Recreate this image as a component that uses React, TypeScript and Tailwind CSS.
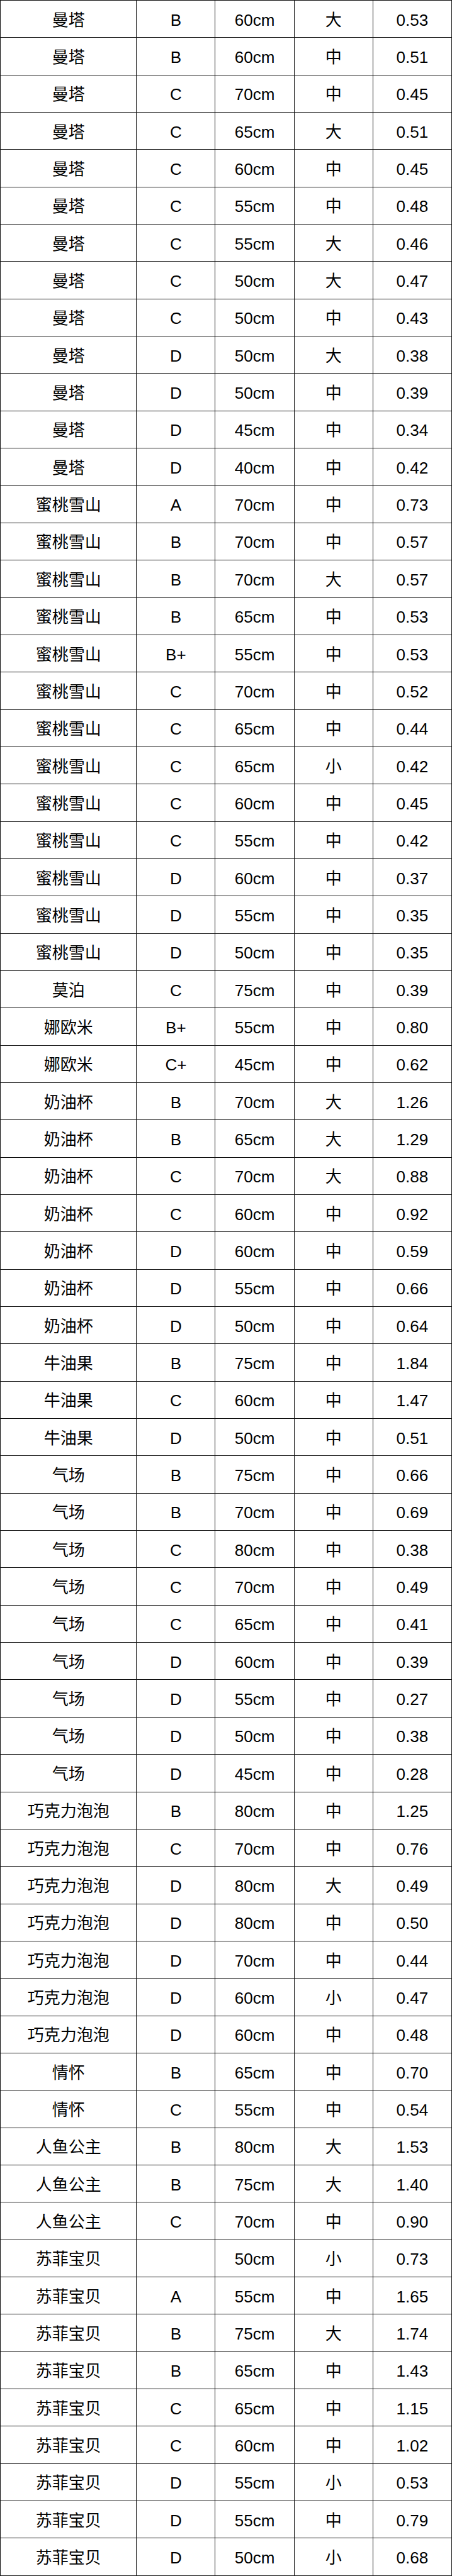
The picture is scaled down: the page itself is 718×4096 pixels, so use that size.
import React from "react";

type Row = [string, string, string, string, string];

const rows: Row[] = [
	["曼塔", "B", "60cm", "大", "0.53"],
	["曼塔", "B", "60cm", "中", "0.51"],
	["曼塔", "C", "70cm", "中", "0.45"],
	["曼塔", "C", "65cm", "大", "0.51"],
	["曼塔", "C", "60cm", "中", "0.45"],
	["曼塔", "C", "55cm", "中", "0.48"],
	["曼塔", "C", "55cm", "大", "0.46"],
	["曼塔", "C", "50cm", "大", "0.47"],
	["曼塔", "C", "50cm", "中", "0.43"],
	["曼塔", "D", "50cm", "大", "0.38"],
	["曼塔", "D", "50cm", "中", "0.39"],
	["曼塔", "D", "45cm", "中", "0.34"],
	["曼塔", "D", "40cm", "中", "0.42"],
	["蜜桃雪山", "A", "70cm", "中", "0.73"],
	["蜜桃雪山", "B", "70cm", "中", "0.57"],
	["蜜桃雪山", "B", "70cm", "大", "0.57"],
	["蜜桃雪山", "B", "65cm", "中", "0.53"],
	["蜜桃雪山", "B+", "55cm", "中", "0.53"],
	["蜜桃雪山", "C", "70cm", "中", "0.52"],
	["蜜桃雪山", "C", "65cm", "中", "0.44"],
	["蜜桃雪山", "C", "65cm", "小", "0.42"],
	["蜜桃雪山", "C", "60cm", "中", "0.45"],
	["蜜桃雪山", "C", "55cm", "中", "0.42"],
	["蜜桃雪山", "D", "60cm", "中", "0.37"],
	["蜜桃雪山", "D", "55cm", "中", "0.35"],
	["蜜桃雪山", "D", "50cm", "中", "0.35"],
	["莫泊", "C", "75cm", "中", "0.39"],
	["娜欧米", "B+", "55cm", "中", "0.80"],
	["娜欧米", "C+", "45cm", "中", "0.62"],
	["奶油杯", "B", "70cm", "大", "1.26"],
	["奶油杯", "B", "65cm", "大", "1.29"],
	["奶油杯", "C", "70cm", "大", "0.88"],
	["奶油杯", "C", "60cm", "中", "0.92"],
	["奶油杯", "D", "60cm", "中", "0.59"],
	["奶油杯", "D", "55cm", "中", "0.66"],
	["奶油杯", "D", "50cm", "中", "0.64"],
	["牛油果", "B", "75cm", "中", "1.84"],
	["牛油果", "C", "60cm", "中", "1.47"],
	["牛油果", "D", "50cm", "中", "0.51"],
	["气场", "B", "75cm", "中", "0.66"],
	["气场", "B", "70cm", "中", "0.69"],
	["气场", "C", "80cm", "中", "0.38"],
	["气场", "C", "70cm", "中", "0.49"],
	["气场", "C", "65cm", "中", "0.41"],
	["气场", "D", "60cm", "中", "0.39"],
	["气场", "D", "55cm", "中", "0.27"],
	["气场", "D", "50cm", "中", "0.38"],
	["气场", "D", "45cm", "中", "0.28"],
	["巧克力泡泡", "B", "80cm", "中", "1.25"],
	["巧克力泡泡", "C", "70cm", "中", "0.76"],
	["巧克力泡泡", "D", "80cm", "大", "0.49"],
	["巧克力泡泡", "D", "80cm", "中", "0.50"],
	["巧克力泡泡", "D", "70cm", "中", "0.44"],
	["巧克力泡泡", "D", "60cm", "小", "0.47"],
	["巧克力泡泡", "D", "60cm", "中", "0.48"],
	["情怀", "B", "65cm", "中", "0.70"],
	["情怀", "C", "55cm", "中", "0.54"],
	["人鱼公主", "B", "80cm", "大", "1.53"],
	["人鱼公主", "B", "75cm", "大", "1.40"],
	["人鱼公主", "C", "70cm", "中", "0.90"],
	["苏菲宝贝", "", "50cm", "小", "0.73"],
	["苏菲宝贝", "A", "55cm", "中", "1.65"],
	["苏菲宝贝", "B", "75cm", "大", "1.74"],
	["苏菲宝贝", "B", "65cm", "中", "1.43"],
	["苏菲宝贝", "C", "65cm", "中", "1.15"],
	["苏菲宝贝", "C", "60cm", "中", "1.02"],
	["苏菲宝贝", "D", "55cm", "小", "0.53"],
	["苏菲宝贝", "D", "55cm", "中", "0.79"],
	["苏菲宝贝", "D", "50cm", "小", "0.68"],
];

export default function App() {
	return (
		<div className="w-[718px] bg-white">
			<div
				className="grid grid-cols-[215fr_124fr_124fr_124fr_124fr] gap-px bg-[#111] p-px text-[26px] text-black"
				style={{ fontFamily: '"Liberation Sans", "Noto Sans CJK SC", sans-serif' }}
			>
				{rows.map((row, i) =>
					row.map((cell, j) => (
						<div
							key={`${i}-${j}`}
							className="flex h-[58.35px] items-center justify-center bg-white pt-[3px] leading-none"
						>
							{cell}
						</div>
					))
				)}
			</div>
		</div>
	);
}
